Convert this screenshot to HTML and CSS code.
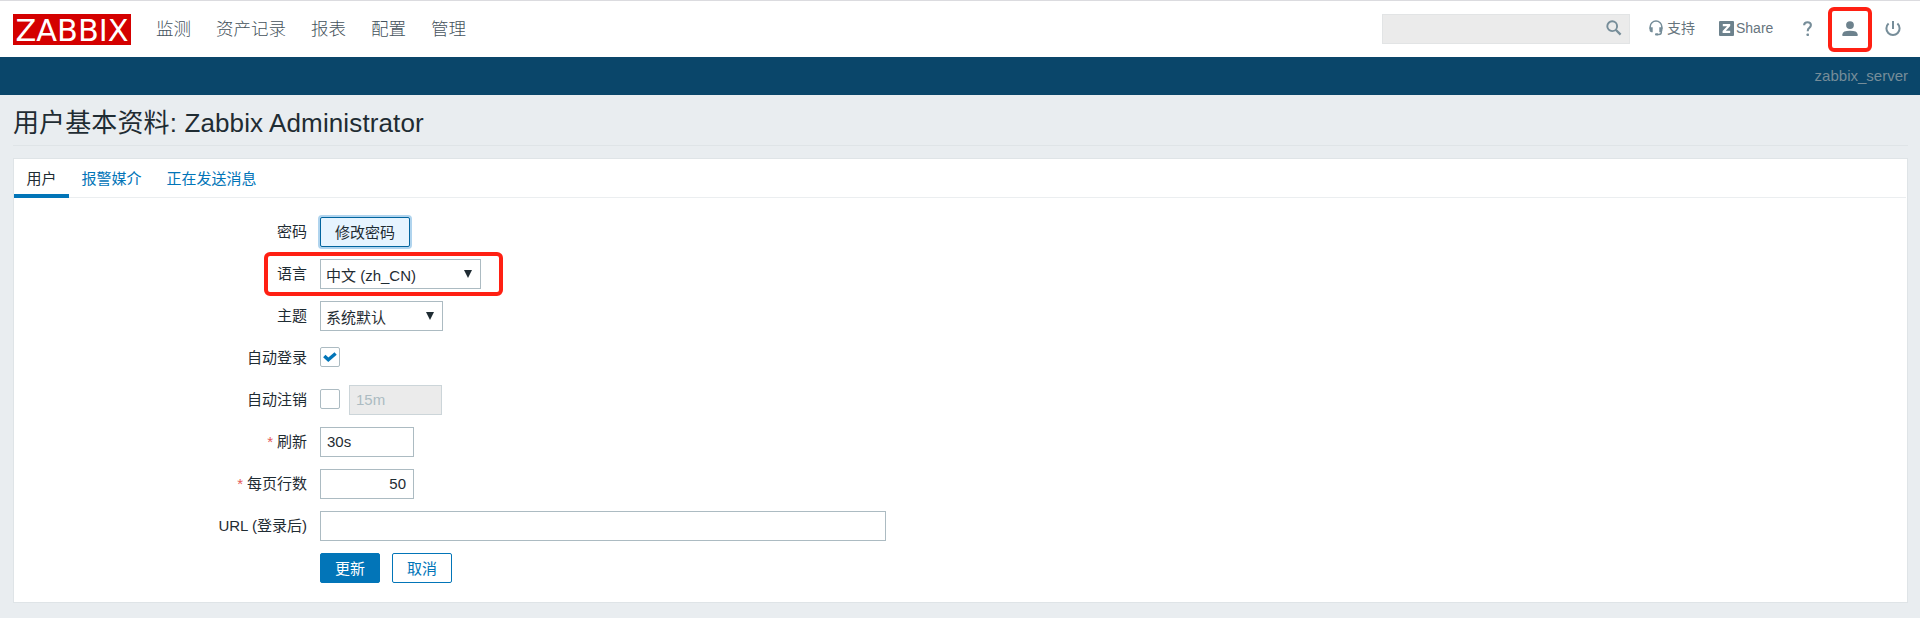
FILE: index.html
```html
<!DOCTYPE html>
<html lang="zh-CN">
<head>
<meta charset="utf-8">
<title>用户基本资料</title>
<link rel="stylesheet" href="styles.css">
</head>
<body>
<header class="top">
  <svg class="logo" width="118" height="31" viewBox="0 0 118 31"><rect width="118" height="31" fill="#d40000"/><text x="2.5" y="26.6" class="logo-text" textLength="113" lengthAdjust="spacingAndGlyphs">ZABBIX</text></svg>
  <nav class="nav"><a>监测</a><a>资产记录</a><a>报表</a><a>配置</a><a>管理</a></nav>
  <div class="search"><svg width="16" height="16" viewBox="0 0 16 16"><circle cx="6.2" cy="6.2" r="4.9" fill="none" stroke="#768d99" stroke-width="1.9"/><path d="M9.7 9.7L14.6 14.6" stroke="#768d99" stroke-width="2.3"/></svg></div>
  <a class="tool support"><svg width="14" height="16" viewBox="0 0 14 16"><path d="M1.2 9V6.6a5.8 5.5 0 0 1 11.6 0V9M12.3 10v2.2q0 2.2-2.4 2.2H8" fill="none" stroke="#768d99" stroke-width="1.5"/><path d="M.5 7.3h3.2v5H2.4Q.5 12 .5 10zM13.5 7.3h-3.2v5h1.3q1.9-.3 1.9-2.3z" fill="#768d99"/><rect x="6" y="13.3" width="3.2" height="2.2" rx="1" fill="#768d99"/></svg>支持</a>
  <a class="tool share"><svg width="15" height="15" viewBox="0 0 15 15"><rect width="15" height="15" rx="1" fill="#6d828d"/><path d="M3.8 3h7.4v2.1L6.8 9.8h4.4V12H3.6V9.9L8.1 5.2H3.8z" fill="#fff"/></svg>Share</a>
  <a class="icon help"><svg width="10" height="16" viewBox="0 0 10 16"><path d="M1.1 4.2Q1.2 1.3 4.6 1.3q3.3 0 3.3 2.8 0 1.6-1.6 2.8Q4.7 8 4.7 10.2" fill="none" stroke="#768d99" stroke-width="2.1"/><rect x="3.5" y="12.5" width="2.5" height="2.5" rx=".8" fill="#768d99"/></svg></a>
  <a class="icon user"><svg width="16" height="16" viewBox="0 0 16 16"><circle cx="8" cy="4.1" r="3.9" fill="#6d828d"/><path d="M.4 15v-1.8Q.6 9.8 8 9.8t7.6 3.4V15z" fill="#6d828d"/></svg></a>
  <a class="icon power"><svg width="16" height="16" viewBox="0 0 16 16"><path d="M8 0v8M3.6 2.5a6.6 6.6 0 1 0 8.8 0" fill="none" stroke="#768d99" stroke-width="2"/></svg></a>
</header>
<div class="subnav">zabbix_server</div>
<main class="page">
  <h1 class="title">用户基本资料: Zabbix Administrator</h1>
  <section class="panel">
    <div class="tabs"><a class="tab active">用户</a><a class="tab">报警媒介</a><a class="tab">正在发送消息</a></div>
    <form class="form">
      <div class="row"><label class="label">密码</label><button type="button" class="btn focused">修改密码</button></div>
      <div class="row marked"><label class="label">语言</label><div class="select lang"><span>中文 (zh_CN)</span><i class="arrow"></i></div></div>
      <div class="row"><label class="label">主题</label><div class="select theme"><span>系统默认</span><i class="arrow"></i></div></div>
      <div class="row"><label class="label">自动登录</label><span class="check"><svg width="14" height="11" viewBox="0 0 14 11"><path d="M1.3 4L5.3 7.8L12.6 1.5" fill="none" stroke="#0275b8" stroke-width="3.4"/></svg></span></div>
      <div class="row"><label class="label">自动注销</label><span class="check"></span><div class="input disabled">15m</div></div>
      <div class="row"><label class="label"><b class="star">*</b>刷新</label><div class="input short">30s</div></div>
      <div class="row"><label class="label"><b class="star">*</b>每页行数</label><div class="input short number">50</div></div>
      <div class="row"><label class="label">URL (登录后)</label><div class="input url"></div></div>
      <div class="row"><span class="label"></span><button type="button" class="btn primary">更新</button><button type="button" class="btn cancel">取消</button></div>
    </form>
  </section>
</main>
</body>
</html>
```
FILE: styles.css
```css
*, *::before, *::after { box-sizing: border-box; }
body {
  margin: 0;
  height: 618px;
  background: #e9edf0;
  color: #1f2c33;
  font: 15px/20px "Liberation Sans", "Noto Sans CJK SC", sans-serif;
}
svg { display: block; flex: none; overflow: visible; }
.top {
  display: flex;
  align-items: flex-start;
  height: 57px;
  padding: 13px 19px 0 13px;
  border-top: 1px solid #dbdbdf;
  background: #fff;
}
.logo-text { font: 31px "DejaVu Sans", sans-serif; fill: #fff; }
.nav {
  display: flex;
  gap: 25px;
  margin-left: 25px;
  padding-top: 2px;
  font-size: 17.5px;
  line-height: 26px;
  font-weight: 300;
  color: #45525c;
}
.search {
  display: flex;
  justify-content: flex-end;
  width: 248px;
  height: 30px;
  margin-left: auto;
  padding: 5px 7px;
  border: 1px solid #e2e4e5;
  background: #ebebeb;
}
.tool {
  display: flex;
  align-items: center;
  height: 20px;
  margin-top: 4px;
  font-size: 14px;
  color: #67757e;
}
.support { width: 46px; margin-left: 19px; gap: 4px; }
.share { width: 54px; margin-left: 24px; gap: 2px; }
.icon { margin-top: 7px; }
.help { margin-left: 30px; }
.user { position: relative; margin-left: 29px; }
.user::after {
  content: "";
  position: absolute;
  left: -14px;
  top: -14px;
  width: 44px;
  height: 45px;
  border: 4px solid #ff2013;
  border-radius: 6px;
}
.power { margin-left: 27px; }
.subnav {
  height: 38px;
  padding: 9px 12px 0 0;
  background: #0a466a;
  color: #768d99;
  text-align: right;
}
.page { padding: 0 12px 0 13px; }
.title {
  height: 51px;
  margin: 0 0 12px;
  padding-top: 10px;
  border-bottom: 1px solid #dfe4e7;
  font-size: 26px;
  line-height: 37px;
  font-weight: 400;
  letter-spacing: 0.12px;
}
.panel {
  height: 445px;
  border: 1px solid #dfe4e7;
  background: #fff;
}
.tabs {
  display: flex;
  height: 39px;
  margin-right: 1px;
  border-bottom: 1px solid #ebeef0;
}
.tab {
  height: 39px;
  padding: 10px 12.5px 0;
  color: #0275b8;
}
.tab.active { color: #1f2c33; border-bottom: 4px solid #0275b8; }
.form {
  display: flex;
  flex-direction: column;
  gap: 12px;
  padding-top: 19px;
}
.row { position: relative; display: flex; height: 30px; }
.marked::after {
  content: "";
  position: absolute;
  left: 250px;
  top: -7px;
  width: 239px;
  height: 44px;
  border: 4px solid #ff2013;
  border-radius: 6px;
}
.label {
  width: 293px;
  margin-right: 13px;
  padding-top: 5px;
  text-align: right;
}
.star { margin-right: 4px; color: #e45959; font-weight: 400; }
.btn {
  height: 30px;
  padding: 1px 14px 0;
  border: 1px solid #0275b8;
  border-radius: 2px;
  background: #fff;
  color: #0275b8;
  font: inherit;
}
.focused {
  background: #e6f4ff;
  border-color: #02659f;
  color: #1f2c33;
  box-shadow: 0 0 0 2px #b0d4ee;
}
.primary { background: #0275b8; color: #fff; }
.cancel { margin-left: 12px; }
.select, .input { height: 30px; border: 1px solid #acbbc2; background: #fff; }
.select {
  display: flex;
  justify-content: space-between;
  padding: 6px 8px 0 5px;
}
.lang { width: 161px; }
.theme { width: 123px; }
.arrow {
  width: 8px;
  height: 8px;
  margin-top: 4px;
  background: #1f2c33;
  clip-path: polygon(0 0, 100% 0, 50% 100%);
}
.input { padding: 4px 7px 0 6px; }
.short { width: 94px; }
.number { text-align: right; }
.url { width: 566px; }
.disabled {
  width: 93px;
  margin-left: 9px;
  border-color: #ccd5d9;
  background: #ebebeb;
  color: #acbbc2;
}
.check {
  width: 20px;
  height: 20px;
  margin-top: 4px;
  padding: 4px 2px;
  border: 1px solid #acbbc2;
  border-radius: 2px;
}
```
